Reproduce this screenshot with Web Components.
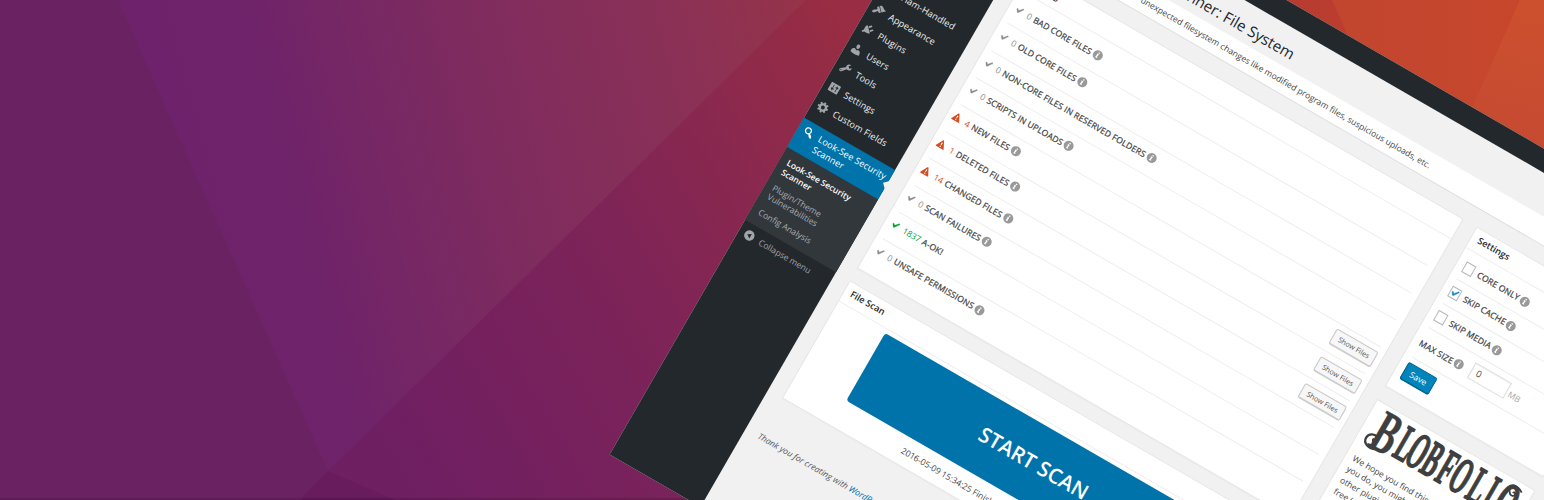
<!DOCTYPE html>
<html lang="en">
<head>
<meta charset="utf-8">
<title>Look-See Security Scanner</title>
<style>
html,body{margin:0;padding:0;width:1544px;height:500px;overflow:hidden;background:#6a2262}
</style>
</head>
<body>
<hero-banner>
  <admin-window>
    <admin-menu slot="menu">
      <menu-item icon="blank">Ham-Handled</menu-item>
      <menu-item icon="appearance">Appearance</menu-item>
      <menu-item icon="plugins">Plugins</menu-item>
      <menu-item icon="users">Users</menu-item>
      <menu-item icon="tools">Tools</menu-item>
      <menu-item icon="settings">Settings</menu-item>
      <menu-item icon="gear">Custom Fields</menu-item>
      <menu-item icon="search" current>Look-See Security Scanner</menu-item>
      <sub-menu>
        <sub-item current>Look-See Security Scanner</sub-item>
        <sub-item>Plugin/Theme Vulnerabilities</sub-item>
        <sub-item>Config Analysis</sub-item>
      </sub-menu>
      <menu-item icon="collapse" muted>Collapse menu</menu-item>
    </admin-menu>
    <page-head slot="head">
      <span slot="title">Look-See Security Scanner: File System</span>
      <span slot="lead">Scan the server for </span>
      <span slot="notice">unexpected filesystem changes like modified program files, suspicious uploads, etc.</span>
    </page-head>
    <post-box slot="main" heading="Finding" style="height:345.2px">
      <scan-row state="none" count="0" info>BAD CORE FILES</scan-row>
      <scan-row state="none" count="0" info>OLD CORE FILES</scan-row>
      <scan-row state="none" count="0" info>NON-CORE FILES IN RESERVED FOLDERS</scan-row>
      <scan-row state="none" count="0" info>SCRIPTS IN UPLOADS</scan-row>
      <scan-row state="warn" count="4" info files>NEW FILES</scan-row>
      <scan-row state="warn" count="1" info files>DELETED FILES</scan-row>
      <scan-row state="warn" count="14" info files>CHANGED FILES</scan-row>
      <scan-row state="none" count="0" info>SCAN FAILURES</scan-row>
      <scan-row state="good" count="1837">A-OK!</scan-row>
      <scan-row state="none" count="0" info>UNSAFE PERMISSIONS</scan-row>
    </post-box>
    <post-box slot="main" heading="File Scan" style="height:135.8px">
      <start-scan>START SCAN<span slot="log">2016-05-09 15:34:25 Finished scanning 1856 files.</span></start-scan>
    </post-box>
    <post-box slot="side" heading="Settings" style="height:184px">
      <option-row>CORE ONLY</option-row>
      <option-row checked>SKIP CACHE</option-row>
      <option-row>SKIP MEDIA</option-row>
      <size-row value="0" unit="MB">MAX SIZE</size-row>
      <save-button>Save</save-button>
    </post-box>
    <post-box slot="side" style="height:150px">
      <blob-card>We hope you find this plugin useful! If<br>you do, you might be interested in our<br>other plugins, which are also 100%<br>free (and ad-free).</blob-card>
    </post-box>
    <span slot="foot">Thank you for creating with <span style="color:#0073aa">WordPress</span>.</span>
  </admin-window>
</hero-banner>

<script>
const P = {
  appearance:'<path d="M14.48 11.06L7.41 3.99l1.5-1.5c.5-.56 2.3-.47 3.51.32 1.21.8 1.43 1.28 2.91 2.1 1.18.64 2.45 1.26 4.45.85zm-.71.71L6.7 4.7 4.93 6.47c-.39.39-.39 1.02 0 1.41l1.06 1.06c.39.39.39 1.03 0 1.42-.6.6-1.43 1.11-2.21 1.69-.35.26-.7.53-1.01.84C1.43 14.23.4 16.08 1.4 17.07c.99 1 2.84-.03 4.18-1.36.31-.31.58-.66.85-1.02.57-.78 1.08-1.61 1.69-2.21.39-.39 1.02-.39 1.41 0l1.06 1.06c.39.39 1.02.39 1.41 0z"/>',
  plugins:'<path d="M13.11 4.36L9.87 7.6 8 5.73l3.24-3.24c.35-.34 1.05-.2 1.56.32.52.51.66 1.21.31 1.55zm-8 1.77l.91-1.12 9.01 9.01-1.19.84c-.71.71-2.63 1.16-3.82 1.16H6.14L4.9 17.26c-.59.59-1.54.59-2.12 0-.59-.58-.59-1.53 0-2.12l1.24-1.24v-3.88c0-1.13.4-3.19 1.09-3.89zm7.26 3.97l3.24-3.24c.34-.35 1.04-.21 1.55.31.52.51.66 1.21.31 1.55l-3.24 3.25z"/>',
  users:'<path d="M10 9.25c-2.27 0-2.73-3.44-2.73-3.44C7 4.02 7.82 2 9.97 2c2.16 0 2.98 2.02 2.71 3.81 0 0-.41 3.44-2.68 3.44zm0 2.57L12.72 10c2.39 0 4.52 2.33 4.52 4.53v2.49s-3.65 1.13-7.24 1.13c-3.65 0-7.24-1.13-7.24-1.13v-2.49c0-2.25 1.94-4.48 4.47-4.48z"/>',
  tools:'<path d="M16.68 9.77c-1.34 1.34-3.3 1.67-4.95.99l-5.41 6.52c-.99.99-2.59.99-3.58 0s-.99-2.59 0-3.57l6.52-5.42c-.68-1.65-.35-3.61.99-4.95 1.28-1.28 3.12-1.62 4.72-1.06l-2.89 2.89 2.82 2.82 2.86-2.87c.53 1.58.18 3.39-1.08 4.65zM3.81 16.21c.4.39 1.04.39 1.43 0 .4-.4.4-1.04 0-1.43-.39-.4-1.03-.4-1.43 0-.39.39-.39 1.03 0 1.43z"/>',
  settings:'<path d="M18 16V4c0-.55-.45-1-1-1H3c-.55 0-1 .45-1 1v12c0 .55.45 1 1 1h14c.55 0 1-.45 1-1zM8 11h1c.55 0 1 .45 1 1s-.45 1-1 1H8v1.5c0 .28-.22.5-.5.5s-.5-.22-.5-.5V13H6c-.55 0-1-.45-1-1s.45-1 1-1h1V5.5c0-.28.22-.5.5-.5s.5.22.5.5V11zm5-2h-1c-.55 0-1-.45-1-1s.45-1 1-1h1V5.5c0-.28.22-.5.5-.5s.5.22.5.5V7h1c.55 0 1 .45 1 1s-.45 1-1 1h-1v5.5c0 .28-.22.5-.5.5s-.5-.22-.5-.5V9z"/>',
  gear:'<path d="M18 12h-2.18c-.17.7-.44 1.35-.81 1.93l1.54 1.54-2.1 2.1-1.54-1.54c-.58.36-1.23.63-1.91.79V19H8v-2.18c-.68-.16-1.33-.43-1.91-.79l-1.54 1.54-2.12-2.12 1.54-1.54c-.36-.58-.63-1.23-.79-1.91H1V9.03h2.17c.16-.7.44-1.35.8-1.94L2.43 5.55l2.1-2.1 1.54 1.54c.58-.37 1.24-.64 1.93-.81V2h3v2.18c.68.16 1.33.43 1.91.79l1.54-1.54 2.12 2.12-1.54 1.54c.36.59.64 1.24.8 1.94H18V12zm-8.5 1.5c1.66 0 3-1.34 3-3s-1.34-3-3-3-3 1.34-3 3 1.34 3 3 3z"/>',
  search:'<path d="M12.14 4.18c1.87 1.87 2.11 4.75.72 6.89.12.1.22.21.36.31.2.16.47.36.81.59.34.24.56.39.66.47.42.31.73.57.94.78.32.32.6.65.84 1 .25.35.44.69.59 1.04.14.35.21.68.18 1-.02.32-.14.59-.36.81s-.49.34-.81.36c-.31.02-.65-.04-.99-.19-.35-.14-.7-.34-1.04-.59-.35-.24-.68-.52-1-.84-.21-.21-.47-.52-.77-.93-.1-.13-.25-.35-.47-.66-.22-.32-.4-.57-.56-.78-.16-.2-.29-.35-.44-.5-2.07 1.09-4.69.76-6.44-.98-2.14-2.15-2.14-5.64 0-7.78 2.15-2.15 5.63-2.15 7.78 0zm-1.41 6.36c1.36-1.37 1.36-3.58 0-4.95-1.37-1.37-3.59-1.37-4.95 0-1.37 1.37-1.37 3.58 0 4.95 1.36 1.37 3.58 1.37 4.95 0z"/>',
  collapse:'<path fill-rule="evenodd" d="M10 2a8 8 0 1 1 0 16a8 8 0 1 1 0-16zM12.2 6.2L6.4 10l5.8 3.8z"/>',
  yes:'<path d="M14.83 4.89l1.34.94-5.81 8.38H9.02L5.78 9.67l1.34-1.25 2.57 2.4z" stroke="currentColor" stroke-width=".4"/>',
  warn:'<path fill-rule="evenodd" d="M10 3.2c.5 0 .8.2 1 .6l6 11.400c.4.800 0 1.500-.8 1.500H3.800c-.8 0-1.200-.7-.8-1.500l6-11.400c.2-.4.5-.6 1-.6zM9 7.400l.4 4.700h1.200l.4-4.700zM9.100 13.200v1.700h1.800v-1.700z"/>',
  info:'<circle cx="10" cy="10" r="8" fill="#999"/><path fill="#fff" d="M9.300 4.800h2.300l-.4 2.100H8.900zM7.800 8h3.200l-1 5.200h1.200l-.3 1.500H7.600L8.600 9.500H7.500z"/>',
  blank:''
};
const svg = (n, s) => `<svg viewBox="0 0 20 20" width="${s}" height="${s}" fill="currentColor">${P[n]}</svg>`;

function define(tag, render) {
  customElements.define(tag, class extends HTMLElement {
    connectedCallback() {
      if (this.shadowRoot) return;
      this.attachShadow({mode: 'open'}).innerHTML = render(this);
    }
  });
}

define('hero-banner', () => `
<style>
:host{display:block;position:relative;width:1544px;height:500px;overflow:hidden;font-family:"Open Sans","Noto Sans",sans-serif}
.bg{display:block}
::slotted(admin-window){position:absolute;left:0;top:0}
</style>
<svg class="bg" width="1544" height="500" viewBox="0 0 1544 500">
  <defs>
    <linearGradient id="a" gradientUnits="userSpaceOnUse" x1="100" y1="420" x2="830" y2="0">
      <stop offset="0" stop-color="#6a2162"/><stop offset=".3" stop-color="#6f1f62"/><stop offset=".6" stop-color="#7c2359"/><stop offset=".8" stop-color="#89284f"/><stop offset="1" stop-color="#982d43"/>
    </linearGradient>
    <linearGradient id="q" gradientUnits="userSpaceOnUse" x1="190" y1="160" x2="800" y2="0">
      <stop offset="0" stop-color="#6d226b"/><stop offset=".15" stop-color="#6f2369"/><stop offset=".4" stop-color="#7b2a61"/><stop offset=".8" stop-color="#8b3156"/><stop offset="1" stop-color="#953349"/>
    </linearGradient>
    <linearGradient id="o" gradientUnits="userSpaceOnUse" x1="1290" y1="0" x2="1544" y2="60">
      <stop offset="0" stop-color="#b83b31"/><stop offset="1" stop-color="#c5472b"/>
    </linearGradient>
    <linearGradient id="r" gradientUnits="userSpaceOnUse" x1="1330" y1="0" x2="1530" y2="0">
      <stop offset="0" stop-color="#c2452f"/><stop offset="1" stop-color="#c6472b"/>
    </linearGradient>
    <linearGradient id="t" gradientUnits="userSpaceOnUse" x1="1530" y1="0" x2="1500" y2="140">
      <stop offset="0" stop-color="#cd502e"/><stop offset="1" stop-color="#c54a31"/>
    </linearGradient>
  </defs>
  <rect width="1544" height="500" fill="url(#a)"/>
  <path d="M0 0H118L330 465L310 500H0z" fill="#6b2263"/>
  <path d="M118 0H806L328 471z" fill="url(#q)"/>
  <path d="M328 471L300 500H395z" fill="#681b5d"/>
  <rect y="498" width="1544" height="2" fill="#000" opacity=".12"/>
  <path d="M1280 0H1544V160z" fill="url(#o)"/>
  <path d="M1332 0H1544V170L1348 36z" fill="url(#r)"/>
  <path d="M1520 0H1544V170L1472 108z" fill="url(#t)"/>
</svg>
<slot></slot>`);

define('admin-window', () => `
<style>
:host{display:grid;grid-template:20.6px 711.4px / 105px 1fr;width:860px;height:732px;
 background:#f1f1f1;transform-origin:0 0;transform:translate(975.6px,-179.5px) rotate(30deg);color:#444;font-size:8.53px}
.bar{grid-column:1/3;background:#23282d}
.content{display:grid;grid-template:min-content min-content 1fr / 501.300px 183px;column-gap:15.200px;padding-left:16px}
.head{grid-column:1/3}
.main,.side{display:flex;flex-direction:column;gap:14.300px}
.foot{grid-column:1/3;padding:37.200px 0 0 0;margin-left:-1.600px;font-style:italic;color:#555d66;line-height:13px}
</style>
<div class="bar"></div>
<slot name="menu"></slot>
<div class="content">
 <div class="head"><slot name="head"></slot></div>
 <div class="main"><slot name="main"></slot></div>
 <div class="side"><slot name="side"></slot></div>
 <div class="foot"><slot name="foot"></slot></div>
</div>`);

define('admin-menu', () => `
<style>:host{display:flex;flex-direction:column;background:#23282d;color:#eee;padding-top:158.200px;box-sizing:border-box}</style><slot></slot>`);

define('menu-item', el => {
  const cur = el.hasAttribute('current'), mut = el.hasAttribute('muted');
  return `
<style>
:host{display:flex;position:relative;box-sizing:border-box;height:${cur ? 34.2 : 22.5}px;${cur ? 'margin-top:6.500px;background:#0073aa;color:#fff;' : ''}${mut ? 'color:#a0a5aa;' : ''}font-size:${mut ? '8.530px' : '9.180px;letter-spacing:.1px'};line-height:11.800px}
.i{width:${el.getAttribute('icon') === 'blank' ? 24.6 : 23.3}px;display:flex;justify-content:center;padding-top:4.700px;color:${cur ? '#fff' : '#a0a5aa'}}
.t{flex:1;padding-top:5.600px;white-space:${cur ? 'normal' : 'nowrap'}}
.n{position:absolute;right:-.6px;top:50%;margin-top:-5.200px;border:5.200px solid transparent;border-right-color:#f1f1f1;border-left:0}
svg{display:block}
</style>
<div class="i">${svg(el.getAttribute('icon'), 13.1)}</div><div class="t"><slot></slot></div>${cur ? '<div class="n"></div>' : ''}`;
});

define('sub-menu', () => `
<style>:host{display:block;background:#32373c;padding:4.600px 0;height:75px}</style><slot></slot>`);
define('sub-item', el => `
<style>:host{display:block;padding:3.900px 8px;font-size:8.530px;line-height:10.200px;${el.hasAttribute('current') ? 'color:#fff;font-weight:600' : 'color:#a9aeb2'}}</style><slot></slot>`);

define('page-head', () => `
<style>
:host{display:block}
.t{margin-left:-3px;height:38px;box-sizing:border-box;padding-top:13.200px;font-size:15.280px;line-height:20px;color:#23282d;white-space:nowrap}
.n{display:flex;height:25.800px;align-items:center;background:#fff;box-shadow:0 .7px .7px rgba(0,0,0,.1);margin-bottom:17.100px;white-space:pre;font-size:8.530px;letter-spacing:.035px;color:#444}
.l{width:112px;text-align:right;flex:none}
</style>
<div class="t"><slot name="title"></slot></div>
<div class="n"><span class="l"><slot name="lead"></slot></span><slot name="notice"></slot></div>`);

define('post-box', el => `
<style>
:host{display:block;box-sizing:border-box;background:#fff;border:.66px solid #e5e5e5;box-shadow:0 .7px .7px rgba(0,0,0,.04)}
h2{margin:0;height:23px;box-sizing:border-box;border-bottom:1px solid #eee;padding-left:6.700px;font-size:9.180px;line-height:20px;font-weight:600;color:#23282d}
.b{padding:3.900px 7.200px}
</style>
${el.hasAttribute('heading') ? `<h2>${el.getAttribute('heading')}</h2>` : ''}<div class="b"><slot></slot></div>`);

define('scan-row', el => {
  const s = el.getAttribute('state');
  const c = {none:'#8c8c8c', warn:'#d54e21', good:'#00a32a'}[s];
  return `
<style>
:host{display:flex;align-items:center;height:31.080px;box-sizing:border-box;border-bottom:1px solid #eee;padding-bottom:4.600px;font-size:8.530px;line-height:13px;color:#444}
:host(:last-of-type){border-color:transparent}
.i{width:14.500px;margin-left:-2.900px;color:${c};height:13px}
.c{color:${c};margin-right:2.900px}
.l{letter-spacing:.14px;-webkit-text-stroke:.24px #444}
.f{margin-left:.8px;height:12.500px}
svg{display:block}
.btn{margin:2.400px -.8px 0 auto;font-size:7.220px;line-height:14.400px;padding:0 5.200px;border:.7px solid #ccc;border-radius:2px;background:#f7f7f7;color:#555;box-shadow:0 .7px 0 #ccc}
.g{width:1.400px;flex:none}
</style>
<span class="i">${svg(s === 'warn' ? 'warn' : 'yes', s === 'warn' ? 12.6 : 13.1)}</span><span class="g"></span><span class="c">${el.getAttribute('count')}</span><span class="l"><slot></slot></span>${el.hasAttribute('info') ? `<span class="f">${svg('info', 12.5)}</span>` : ''}${el.hasAttribute('files') ? '<span class="btn">Show Files</span>' : ''}`;
});

define('start-scan', () => `
<style>
:host{display:block}
.b{margin:.2px 49px 0;height:78px;border-radius:3.300px;background:#0073aa;color:#fff;font-size:20.800px;line-height:77px;text-align:center;font-weight:600;letter-spacing:.1px}
.l{padding-left:121.500px;margin-top:8.300px;font-size:8.530px;line-height:13px;white-space:nowrap}
</style><div class="b"><slot></slot></div><div class="l"><slot name="log"></slot></div>`);

define('option-row', el => `
<style>
:host{display:flex;align-items:center;height:28px;box-sizing:border-box;border-bottom:1px solid #eee;padding-bottom:1.800px;font-size:8.530px;letter-spacing:.14px;line-height:13px;color:#444;-webkit-text-stroke:.24px #444}
i{display:block;width:9.200px;height:9.200px;border:.7px solid #b4b9be;background:#fff;color:#1e8cbe;margin:0 4.700px 0 .2px}
i svg{display:block;margin:-2.200px 0 0 -2.700px}
.f{height:12.500px;margin-left:.6px}.f svg{display:block}
</style><i>${el.hasAttribute('checked') ? svg('yes', 13.8) : ''}</i><slot></slot><span class="f">${svg('info', 12.5)}</span>`);

define('size-row', el => `
<style>
:host{display:flex;align-items:center;height:33.500px;box-sizing:border-box;border-bottom:1px solid #eee;padding-bottom:1px;font-size:8.530px;line-height:13px;color:#444}
.m{letter-spacing:.14px;-webkit-text-stroke:.24px #444}
.f{height:12.500px;margin-left:.6px}.f svg{display:block}
.v{width:35px;height:16.500px;line-height:16px;border:.7px solid #ddd;box-shadow:inset 0 .7px 1.300px rgba(0,0,0,.07);padding-left:5px;margin:-2px 2px 0 7.400px;font-size:9.180px}
.u{color:#aaa}
</style><span class="m"><slot></slot></span><span class="f">${svg('info', 12.5)}</span><span class="v">${el.getAttribute('value')}</span><span class="u">${el.getAttribute('unit')}</span>`);

define('save-button', () => `
<style>:host{display:block;width:33.500px;height:19px;box-sizing:border-box;margin:5.200px 0 0 0;border:.7px solid #006799;border-radius:2px;background:#0085ba;box-shadow:0 .7px 0 #006799;color:#fff;font-size:8.530px;line-height:17px;text-align:center}</style><slot></slot>`);

define('blob-card', () => `
<style>:host{display:block;font-size:8.530px;line-height:12.800px;color:#444;white-space:nowrap}
svg{display:block;margin-bottom:6px;overflow:visible}
text{font-family:"Liberation Serif",serif;font-weight:700;fill:#3f3f3f;stroke:#3f3f3f}</style>
<svg width="167" height="46" viewBox="0 0 167 46">
 <text transform="translate(4.500 40.500) scale(.58 1)" font-size="61" stroke-width=".5">B</text>
 <text transform="scale(.44 1)" font-size="52" stroke-width="1.600"><tspan x="71 100 141 181 213 261 300" y="37">LOBFOLI</tspan><tspan x="328" y="41" font-size="60">O</tspan></text>
 <path d="M15 39.500C8 43 .8 40 .8 34.500C.8 29 6 26.500 10 28C13.500 29.500 13 34 9.800 34C8 34 7.400 32.400 8.300 31.300" fill="none" stroke="#3f3f3f" stroke-width="2.300"/>
 <path d="M152 9C147 4 156 -1 163 4M152 9C154 13 159 12 158 8.500C157 7 155.500 7.500 155.800 8.800" fill="none" stroke="#3f3f3f" stroke-width="1.800"/>
</svg><slot></slot>`);
</script>
</body>
</html>
